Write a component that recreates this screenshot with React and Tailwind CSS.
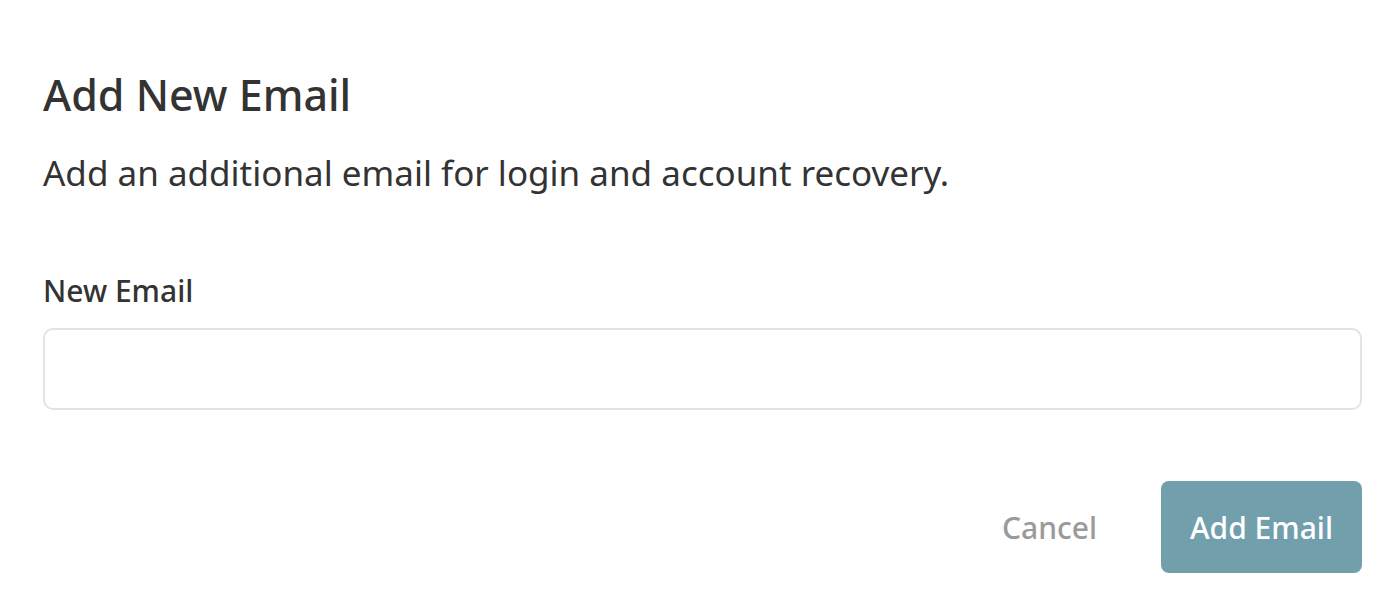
export default function App() {
  return (
    <div className="min-h-[610px] bg-white pl-[43px] pr-[34px] pt-[65px] text-[#333333]" style={{ fontFamily: '"Noto Sans", sans-serif' }}>
      <h1 className="text-[43px] font-medium leading-[60px]">Add New Email</h1>
      <p className="mt-[24px] text-[35px] leading-[48px]">Add an additional email for login and account recovery.</p>
      <label className="mt-[74px] block text-[30px] font-medium leading-[40px]">New Email</label>
      <input
        type="email"
        className="mt-[17px] block h-[82px] w-full rounded-[10px] border-2 border-[#e2e4e7] px-4 text-[28px] outline-none"
      />
      <div className="mt-[71px] flex items-center justify-end gap-[64px]">
        <button className="text-[30px] font-medium text-[#9a9a9a]">Cancel</button>
        <button className="h-[92px] w-[201px] rounded-[8px] bg-[#729fac] text-[30px] font-medium text-white">Add Email</button>
      </div>
    </div>
  );
}
